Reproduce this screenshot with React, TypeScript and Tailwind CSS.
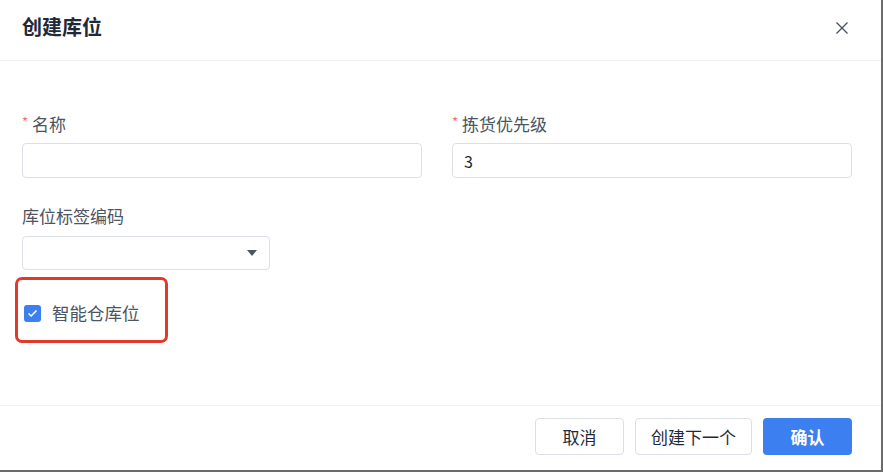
import React from 'react';

const font = { fontFamily: '"Noto Sans CJK SC", "Noto Sans", sans-serif' };

const Label: React.FC<{ text: string; required?: boolean }> = ({ text, required }) => (
  <div className="flex items-center h-6 text-[17px] text-[#4b5563]">
    {required && <span className="text-[#f56c6c] text-[13px] mr-[4px] -mt-[4px]">*</span>}
    {text}
  </div>
);

const Input: React.FC<{ value?: string }> = ({ value }) => (
  <div className="h-[35px] w-full border border-[#dcdfe6] rounded-[4px] bg-white flex items-center px-[11px] text-[16px] text-[#1f2937]">
    {value}
  </div>
);

export default function App() {
  return (
    <div className="w-[883px] h-[472px] bg-[#6b6b6b]" style={font}>
      <div className="w-[881px] h-[470px] bg-white flex flex-col">
        <div className="h-[61px] border-b border-[#eef0f3] flex items-center justify-between pl-[22px] pr-[32px] shrink-0">
          <div className="text-[20px] font-bold text-[#1f2937] -mt-[6px]">创建库位</div>
          <svg width="14" height="14" viewBox="0 0 14 14" className="-mt-[4px]">
            <path d="M1.5 1.5 L12.5 12.5 M12.5 1.5 L1.5 12.5" stroke="#4b5563" strokeWidth="1.4" fill="none" />
          </svg>
        </div>
        <div className="flex-1 px-[22px] pt-[51px]">
          <div className="grid grid-cols-2 gap-x-[30px] w-[830px]">
            <div className="flex flex-col gap-[7px]">
              <Label text="名称" required />
              <Input />
            </div>
            <div className="flex flex-col gap-[7px]">
              <Label text="拣货优先级" required />
              <Input value="3" />
            </div>
          </div>
          <div className="mt-[26px] flex flex-col gap-[8px] w-[248px]">
            <Label text="库位标签编码" />
            <div className="h-[34px] border border-[#dcdfe6] rounded-[4px] flex items-center justify-end pr-[12px]">
              <svg width="10" height="6" viewBox="0 0 10 6">
                <path d="M0 0 L10 0 L5 6 Z" fill="#4b5563" />
              </svg>
            </div>
          </div>
          <div className="mt-[7px] -ml-[7px] inline-flex items-center border-[3px] border-[#e23a2a] rounded-[7px] pl-[6px] pr-[25px] pt-[21px] pb-[15px]">
            <div className="w-[17px] h-[17px] rounded-[3px] bg-[#3b7ff0] flex items-center justify-center">
              <svg width="11" height="9" viewBox="0 0 11 9">
                <path d="M1.5 4.5 L4.2 7 L9.5 1.5" stroke="white" strokeWidth="1.6" fill="none" />
              </svg>
            </div>
            <span className="ml-[11px] text-[17.5px] leading-6 text-[#4b5563]">智能仓库位</span>
          </div>
        </div>
        <div className="h-[65px] border-t border-[#eef0f3] flex items-start justify-end gap-[11px] pr-[29px] pt-[12px] shrink-0">
          <button className="h-[37px] w-[89px] border border-[#dcdfe6] rounded-[4px] text-[17px] text-[#1f2937] bg-white">取消</button>
          <button className="h-[37px] w-[117px] border border-[#dcdfe6] rounded-[4px] text-[17px] text-[#1f2937] bg-white">创建下一个</button>
          <button className="h-[37px] w-[89px] rounded-[4px] text-[17px] font-bold text-white bg-[#3b7ff0]">确认</button>
        </div>
      </div>
    </div>
  );
}
